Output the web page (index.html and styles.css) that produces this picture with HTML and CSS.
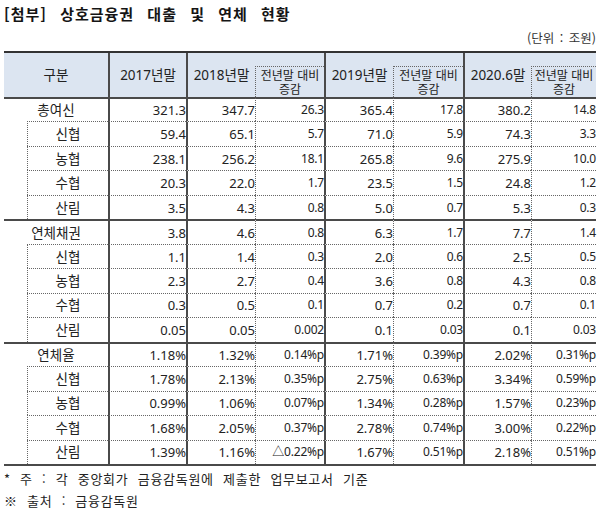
FILE: index.html
```html
<!DOCTYPE html>
<html lang="ko">
<head>
<meta charset="utf-8">
<title>상호금융권 대출 및 연체 현황</title>
<link rel="stylesheet" href="styles.css">
</head>
<body>
<div class="page">
  <h1 class="title">[첨부] 상호금융권 대출 및 연체 현황</h1>
  <div class="unit">(단위 : 조원)</div>
  <table class="stats">
    <colgroup>
      <col class="c-ind"><col class="c-lbl"><col class="c-17"><col class="c-18"><col class="c-18d"><col class="c-19"><col class="c-19d"><col class="c-20"><col class="c-20d">
    </colgroup>
    <thead>
      <tr class="h1">
        <th colspan="2" rowspan="2">구분</th>
        <th rowspan="2" class="sl">2017년말</th>
        <th rowspan="2" class="sl">2018년말</th>
        <th class="pad"></th>
        <th rowspan="2" class="sl">2019년말</th>
        <th class="pad"></th>
        <th rowspan="2" class="sl">2020.6말</th>
        <th class="pad"></th>
      </tr>
      <tr class="h2">
        <th class="hd"><span class="hd-line">전년말 대비</span><span class="hd-line">증감</span></th>
        <th class="hd"><span class="hd-line">전년말 대비</span><span class="hd-line">증감</span></th>
        <th class="hd"><span class="hd-line">전년말 대비</span><span class="hd-line">증감</span></th>
      </tr>
    </thead>
    <tbody>
      <tr class="grp">
        <td colspan="2" class="lbl">총여신</td>
        <td class="n sl">321.3</td><td class="n sl">347.7</td><td class="d dl">26.3</td>
        <td class="n sl">365.4</td><td class="d dl">17.8</td>
        <td class="n sl">380.2</td><td class="d dl">14.8</td>
      </tr>
      <tr class="sub">
        <td rowspan="4" class="ind"></td>
        <td class="lbl dl">신협</td>
        <td class="n sl">59.4</td><td class="n sl">65.1</td><td class="d dl">5.7</td>
        <td class="n sl">71.0</td><td class="d dl">5.9</td>
        <td class="n sl">74.3</td><td class="d dl">3.3</td>
      </tr>
      <tr class="sub">
        <td class="lbl dl">농협</td>
        <td class="n sl">238.1</td><td class="n sl">256.2</td><td class="d dl">18.1</td>
        <td class="n sl">265.8</td><td class="d dl">9.6</td>
        <td class="n sl">275.9</td><td class="d dl">10.0</td>
      </tr>
      <tr class="sub">
        <td class="lbl dl">수협</td>
        <td class="n sl">20.3</td><td class="n sl">22.0</td><td class="d dl">1.7</td>
        <td class="n sl">23.5</td><td class="d dl">1.5</td>
        <td class="n sl">24.8</td><td class="d dl">1.2</td>
      </tr>
      <tr class="sub">
        <td class="lbl dl">산림</td>
        <td class="n sl">3.5</td><td class="n sl">4.3</td><td class="d dl">0.8</td>
        <td class="n sl">5.0</td><td class="d dl">0.7</td>
        <td class="n sl">5.3</td><td class="d dl">0.3</td>
      </tr>

      <tr class="grp">
        <td colspan="2" class="lbl">연체채권</td>
        <td class="n sl">3.8</td><td class="n sl">4.6</td><td class="d dl">0.8</td>
        <td class="n sl">6.3</td><td class="d dl">1.7</td>
        <td class="n sl">7.7</td><td class="d dl">1.4</td>
      </tr>
      <tr class="sub">
        <td rowspan="4" class="ind"></td>
        <td class="lbl dl">신협</td>
        <td class="n sl">1.1</td><td class="n sl">1.4</td><td class="d dl">0.3</td>
        <td class="n sl">2.0</td><td class="d dl">0.6</td>
        <td class="n sl">2.5</td><td class="d dl">0.5</td>
      </tr>
      <tr class="sub">
        <td class="lbl dl">농협</td>
        <td class="n sl">2.3</td><td class="n sl">2.7</td><td class="d dl">0.4</td>
        <td class="n sl">3.6</td><td class="d dl">0.8</td>
        <td class="n sl">4.3</td><td class="d dl">0.8</td>
      </tr>
      <tr class="sub">
        <td class="lbl dl">수협</td>
        <td class="n sl">0.3</td><td class="n sl">0.5</td><td class="d dl">0.1</td>
        <td class="n sl">0.7</td><td class="d dl">0.2</td>
        <td class="n sl">0.7</td><td class="d dl">0.1</td>
      </tr>
      <tr class="sub">
        <td class="lbl dl">산림</td>
        <td class="n sl">0.05</td><td class="n sl">0.05</td><td class="d dl">0.002</td>
        <td class="n sl">0.1</td><td class="d dl">0.03</td>
        <td class="n sl">0.1</td><td class="d dl">0.03</td>
      </tr>

      <tr class="grp">
        <td colspan="2" class="lbl">연체율</td>
        <td class="n sl">1.18%</td><td class="n sl">1.32%</td><td class="d dl">0.14%p</td>
        <td class="n sl">1.71%</td><td class="d dl">0.39%p</td>
        <td class="n sl">2.02%</td><td class="d dl">0.31%p</td>
      </tr>
      <tr class="sub">
        <td rowspan="4" class="ind"></td>
        <td class="lbl dl">신협</td>
        <td class="n sl">1.78%</td><td class="n sl">2.13%</td><td class="d dl">0.35%p</td>
        <td class="n sl">2.75%</td><td class="d dl">0.63%p</td>
        <td class="n sl">3.34%</td><td class="d dl">0.59%p</td>
      </tr>
      <tr class="sub">
        <td class="lbl dl">농협</td>
        <td class="n sl">0.99%</td><td class="n sl">1.06%</td><td class="d dl">0.07%p</td>
        <td class="n sl">1.34%</td><td class="d dl">0.28%p</td>
        <td class="n sl">1.57%</td><td class="d dl">0.23%p</td>
      </tr>
      <tr class="sub">
        <td class="lbl dl">수협</td>
        <td class="n sl">1.68%</td><td class="n sl">2.05%</td><td class="d dl">0.37%p</td>
        <td class="n sl">2.78%</td><td class="d dl">0.74%p</td>
        <td class="n sl">3.00%</td><td class="d dl">0.22%p</td>
      </tr>
      <tr class="sub">
        <td class="lbl dl">산림</td>
        <td class="n sl">1.39%</td><td class="n sl">1.16%</td><td class="d dl">△0.22%p</td>
        <td class="n sl">1.67%</td><td class="d dl">0.51%p</td>
        <td class="n sl">2.18%</td><td class="d dl">0.51%p</td>
      </tr>
    </tbody>
  </table>
  <p class="note">* 주 : 각 중앙회가 금융감독원에 제출한 업무보고서 기준</p>
  <p class="note">※ 출처 : 금융감독원</p>
</div>
</body>
</html>
```

FILE: styles.css
```css
* { box-sizing: border-box; }
html, body { margin: 0; padding: 0; background: #ffffff; }
body {
  width: 600px;
  height: 510px;
  overflow: hidden;
  font-family: "Noto Sans", "Noto Sans CJK KR", sans-serif;
  color: #222222;
}
.page { padding: 4px 4px 0 4px; }

.title {
  margin: 0;
  font-family: "Noto Sans CJK KR", sans-serif;
  font-size: 15px;
  font-weight: 700;
  line-height: 20px;
  letter-spacing: 1px;
  word-spacing: 8px;
  color: #151515;
}
.unit {
  margin-top: 6px;
  text-align: right;
  font-family: "Noto Sans CJK KR", sans-serif;
  font-size: 12.5px;
  line-height: 16px;
  word-spacing: 2px;
  color: #333333;
}

.stats {
  margin-top: 5px;
  width: 592px;
  table-layout: fixed;
  border-collapse: separate;
  border-spacing: 0;
  border-top: 2px solid #333333;
  border-bottom: 2px solid #4a4a4a;
}
.c-ind { width: 23px; }
.c-lbl { width: 81px; }
.c-17 { width: 78px; }
.c-18 { width: 69px; }
.c-18d { width: 69px; }
.c-19 { width: 69px; }
.c-19d { width: 70px; }
.c-20 { width: 68px; }
.c-20d { width: 65px; }

.stats th, .stats td { padding: 0; white-space: nowrap; }

.stats thead th {
  background: #dce5f1;
  font-weight: 400;
  font-size: 13.5px;
  line-height: 16px;
  text-align: center;
  vertical-align: middle;
  color: #222222;
}
.stats .h1 { height: 13px; }
.stats .h2 { height: 31px; }
.stats thead th.hd {
  font-family: "Liberation Sans", "Noto Sans CJK KR", sans-serif;
  font-size: 12px;
  line-height: 14px;
  border-top: 1px dotted #666666;
  border-left: 1px dotted #666666;
  padding-top: 1px;
}
.hd-line { display: block; height: 14px; line-height: 14px; }

.sl { border-left: 2px solid #4a4a4a; }
.dl { border-left: 1px dotted #666666; }

.stats tbody tr { height: 24.47px; }
.stats td { vertical-align: middle; line-height: 16px; }
.grp td { border-top: 2px solid #4a4a4a; }
.sub td { border-top: 1px dotted #666666; }
.sub td.ind { border-top: none; }

.lbl { text-align: center; font-size: 13.5px; }
.n { text-align: right; font-size: 13px; padding-right: 5px; }
.d { text-align: right; font-size: 12px; padding-right: 4px; letter-spacing: -0.2px; }

.note {
  margin: 0;
  font-family: "Noto Sans CJK KR", sans-serif;
  font-size: 13px;
  line-height: 22px;
  letter-spacing: 0.7px;
  word-spacing: 5px;
  color: #222222;
}
.stats + .note { margin-top: 2px; }
```
